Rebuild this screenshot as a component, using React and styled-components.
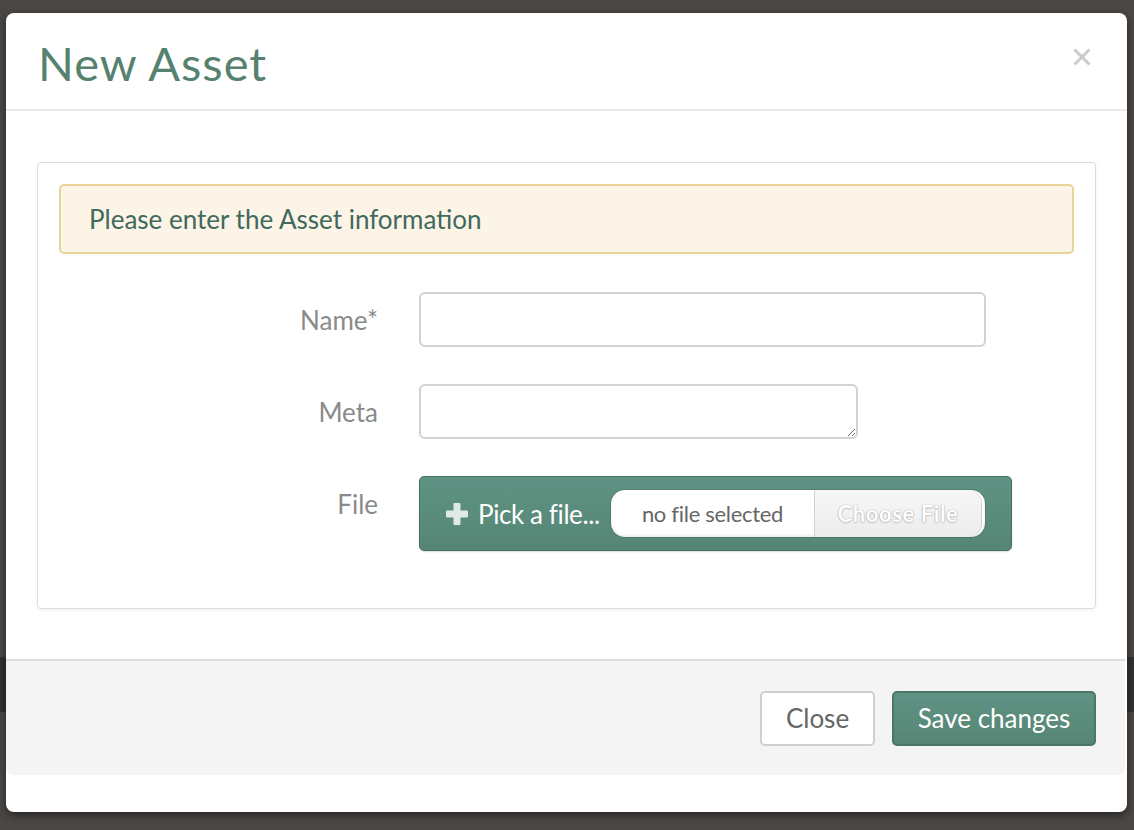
import React from 'react';
import styled, { createGlobalStyle } from 'styled-components';

const GlobalStyle = createGlobalStyle`
  html, body {
    margin: 0;
    padding: 0;
    background: #4b4745;
    font-family: Lato, "Open Sans", sans-serif;
  }
  * { box-sizing: border-box; }
`;

const Backdrop = styled.div`
  width: 1134px;
  height: 830px;
  padding: 13px 7px 0 6px;
  background:
    linear-gradient(to bottom, transparent 657px, #2f3331 657px, #2f3331 712px, transparent 712px),
    #4b4745;
  overflow: hidden;
`;

const Modal = styled.div`
  width: 1121px;
  height: 799px;
  background: #fff;
  border-radius: 8px;
  box-shadow: 0 3px 9px rgba(0, 0, 0, 0.5);
  display: flex;
  flex-direction: column;
  overflow: hidden;
`;

const Header = styled.div`
  height: 98px;
  padding: 0 33px 0 32px;
  border-bottom: 2px solid #e9e9e9;
  display: flex;
  align-items: center;
  justify-content: space-between;
`;

const Title = styled.h2`
  margin: 0;
  font-size: 47px;
  font-weight: 400;
  letter-spacing: 1px;
  color: #56816f;
  line-height: 1;
  padding-top: 4px;
`;

const CloseX = styled.button`
  border: none;
  background: none;
  padding: 0;
  width: 24px;
  height: 24px;
  margin-top: -8px;
  cursor: pointer;
  display: flex;
  align-items: center;
  justify-content: center;
`;

const Body = styled.div`
  padding: 51px 31px 50px 31px;
`;

const Panel = styled.div`
  border: 1px solid #dcdcdc;
  border-radius: 4px;
  background: #fff;
  box-shadow: 0 1px 4px rgba(0, 0, 0, 0.06);
  padding: 21px 21px 57px 21px;
`;

const Alert = styled.div`
  height: 70px;
  background: #fcf4e7;
  border: 2px solid #e8d494;
  border-radius: 5px;
  padding: 0 28px;
  display: flex;
  align-items: center;
  font-size: 26px;
  color: #41695c;
`;

const Form = styled.div`
  margin-top: 38px;
  display: grid;
  grid-template-columns: 319px 1fr;
  column-gap: 41px;
  row-gap: 37px;
  align-items: start;
`;

const Label = styled.label`
  text-align: right;
  font-size: 26px;
  color: #8a8a8a;
  line-height: 56px;
  height: 55px;
`;

const TextInput = styled.input`
  display: block;
  width: 567px;
  height: 55px;
  margin: 0;
  border: 2px solid #d2d2d2;
  border-radius: 6px;
  font-family: inherit;
  font-size: 22px;
  padding: 0 12px;
  outline: none;
`;

const TextArea = styled.textarea`
  width: 439px;
  height: 55px;
  margin: 0;
  border: 2px solid #d2d2d2;
  border-radius: 6px;
  font-family: inherit;
  font-size: 22px;
  padding: 8px 12px;
  outline: none;
  resize: both;
  display: block;
`;

const FileButton = styled.div`
  width: 593px;
  height: 75px;
  border: 1px solid #46705f;
  border-radius: 5px;
  background: linear-gradient(to bottom, #5f9383, #568575);
  box-shadow: 0 1px 2px rgba(0, 0, 0, 0.15);
  display: flex;
  align-items: center;
  padding-left: 26px;
  color: #fff;
  font-size: 26px;
`;

const PickLabel = styled.span`
  width: 165px;
  display: flex;
  align-items: center;
  gap: 10px;
  letter-spacing: -0.4px;
  white-space: nowrap;
`;

const FilePill = styled.div`
  width: 374px;
  height: 47px;
  border-radius: 14px;
  background: #fff;
  display: flex;
  overflow: hidden;
  box-shadow: 0 0 0 1px rgba(0, 0, 0, 0.12), inset 0 -2px 3px rgba(0, 0, 0, 0.08);
`;

const FileName = styled.span`
  width: 204px;
  display: flex;
  align-items: center;
  justify-content: center;
  color: #666;
  font-size: 22px;
  letter-spacing: -0.3px;
  border-right: 1px solid #d0d0d0;
`;

const ChooseFile = styled.span`
  flex: 1;
  display: flex;
  align-items: center;
  justify-content: center;
  background: linear-gradient(to bottom, #f7f7f7, #ececec);
  color: #fff;
  font-size: 22px;
  font-weight: 700;
  letter-spacing: 0.6px;
  text-shadow: 0 0 1px rgba(0, 0, 0, 0.45), 0 1px 2px rgba(0, 0, 0, 0.15);
  border-radius: 0 14px 14px 0;
  margin-right: 4px;
  box-shadow: 1px 0 0 #cfcfcf;
`;

const Footer = styled.div`
  border-top: 2px solid #dedede;
  background: #f4f4f4;
  height: 116px;
  margin-right: 2px;
  border-radius: 0 0 8px 8px;
  display: flex;
  align-items: center;
  justify-content: flex-end;
  gap: 17px;
  padding: 0 29px 0 0;
`;

const Button = styled.button`
  height: 55px;
  padding: 0;
  border-radius: 5px;
  font-family: inherit;
  font-size: 26px;
  cursor: pointer;
  border: 2px solid ${p => (p.$primary ? '#4a7766' : '#cfcfcf')};
  background: ${p => (p.$primary ? 'linear-gradient(to bottom, #5f9383, #568575)' : '#fff')};
  color: ${p => (p.$primary ? '#fff' : '#666')};
  width: ${p => p.$width}px;
`;

const PlusIcon = () => (
  <svg width="22" height="22" viewBox="0 0 22 22">
    <rect x="7.5" y="0" width="7" height="22" rx="1" fill="#dfe9e5" />
    <rect x="0" y="7.5" width="22" height="7" rx="1" fill="#dfe9e5" />
  </svg>
);

export default function App() {
  return (
    <>
      <GlobalStyle />
      <Backdrop>
        <Modal>
          <Header>
            <Title>New Asset</Title>
            <CloseX aria-label="Close">
              <svg width="18" height="18" viewBox="0 0 18 18">
                <path d="M1.5 1.5 L16.5 16.5 M16.5 1.5 L1.5 16.5" stroke="#cbcbcb" strokeWidth="3" />
              </svg>
            </CloseX>
          </Header>
          <Body>
            <Panel>
              <Alert>Please enter the Asset information</Alert>
              <Form>
                <Label>Name*</Label>
                <TextInput type="text" />
                <Label>Meta</Label>
                <TextArea />
                <Label>File</Label>
                <FileButton>
                  <PickLabel>
                    <PlusIcon />
                    Pick a file...
                  </PickLabel>
                  <FilePill>
                    <FileName>no file selected</FileName>
                    <ChooseFile>Choose File</ChooseFile>
                  </FilePill>
                </FileButton>
              </Form>
            </Panel>
          </Body>
          <Footer>
            <Button $width={115}>Close</Button>
            <Button $primary $width={204}>Save changes</Button>
          </Footer>
        </Modal>
      </Backdrop>
    </>
  );
}
